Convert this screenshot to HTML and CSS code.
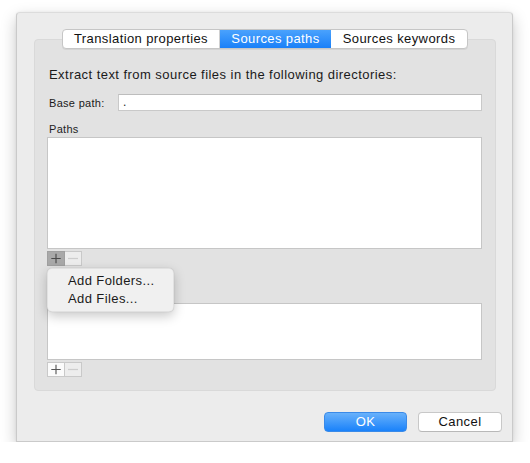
FILE: index.html
```html
<!DOCTYPE html>
<html>
<head>
<meta charset="utf-8">
<link rel="stylesheet" href="styles.css">
</head>
<body>
<div class="window">
  <div class="tabs">
    <div class="tab tab-1">Translation properties</div>
    <div class="tab tab-2 active">Sources paths</div>
    <div class="tab tab-3">Sources keywords</div>
  </div>
  <div class="tabbox">
    <div class="intro">Extract text from source files in the following directories:</div>
    <div class="base-row">
      <label class="base-label">Base path:</label>
      <div class="field">.</div>
    </div>
    <div class="list-label">Paths</div>
    <div class="list list-paths"></div>
    <div class="bar-wrap">
      <div class="bar">
        <div class="btn btn-plus pressed">
          <svg width="17" height="13" viewBox="0 0 17 13"><path d="M8.5 1.5v10M3.5 6.5h10" stroke="#4a4a4a" stroke-width="1.2" fill="none"/></svg>
        </div>
        <div class="btn btn-minus disabled">
          <svg width="16" height="13" viewBox="0 0 16 13"><path d="M3 6.5h10" stroke="#cdcdcd" stroke-width="1.2" fill="none"/></svg>
        </div>
      </div>
      <div class="menu">
        <div class="menu-item">Add Folders...</div>
        <div class="menu-item">Add Files...</div>
      </div>
    </div>
    <div class="list list-second"></div>
    <div class="bar">
      <div class="btn btn-plus">
        <svg width="17" height="13" viewBox="0 0 17 13"><path d="M8.5 1.5v10M3.5 6.5h10" stroke="#555" stroke-width="1.2" fill="none"/></svg>
      </div>
      <div class="btn btn-minus disabled">
        <svg width="16" height="13" viewBox="0 0 16 13"><path d="M3 6.5h10" stroke="#cdcdcd" stroke-width="1.2" fill="none"/></svg>
      </div>
    </div>
  </div>
  <div class="footer">
    <div class="button ok">OK</div>
    <div class="button cancel">Cancel</div>
  </div>
</div>
</body>
</html>
```
FILE: styles.css
```css
* { box-sizing: border-box; }
html, body {
  margin: 0;
  padding: 0;
  background: #ffffff;
  font-family: "Liberation Sans", Arial, sans-serif;
  color: #1e1e1e;
}
body { padding: 12px 0 0 16px; }

.window {
  width: 497px;
  height: 430px;
  background: #ececec;
  border: 1px solid #cacaca;
  border-top-color: #dcdcdc;
  border-radius: 4px 4px 0 0;
  box-shadow: 0 6px 16px rgba(0,0,0,0.22), 0 0 3px rgba(0,0,0,0.06);
  padding: 16px 0 9px 0;
  display: flex;
  flex-direction: column;
}

.tabs {
  position: relative;
  z-index: 2;
  align-self: center;
  margin-left: 1px;
  display: flex;
  height: 20px;
  border: 1px solid #c6c6c6;
  border-radius: 4px;
  background: #ffffff;
  box-shadow: 0 1px 0 rgba(0,0,0,0.06);
  overflow: hidden;
}
.tab {
  font-size: 13px;
  letter-spacing: 0.4px;
  line-height: 18px;
  text-align: center;
  color: #111;
}
.tab-1 { width: 157px; border-right: 1px solid #d0d0d0; }
.tab-2 { width: 111px; }
.tab-3 { width: 136px; }
.tab.active {
  background: linear-gradient(#4aa2fd, #1a80f8);
  color: #ffffff;
  border-color: #1a7cf0;
}

.tabbox {
  margin: -10px 16px 0 17px;
  height: 352px;
  background: #e2e2e2;
  border: 1px solid #d9d9d9;
  border-radius: 4px;
  padding: 27px 13px 0 12px;
}

.intro {
  font-size: 13px;
  letter-spacing: 0.45px;
  line-height: 16px;
  padding-left: 2px;
  color: #1a1a1a;
}

.base-row {
  display: flex;
  align-items: center;
  margin-top: 11px;
  height: 17px;
}
.base-label {
  font-size: 11px;
  letter-spacing: 0.3px;
  width: 71px;
  padding-left: 2px;
  color: #1a1a1a;
}
.field {
  flex: 1;
  height: 17px;
  background: #ffffff;
  border: 1px solid #c9c9c9;
  border-top-color: #bdbdbd;
  font-size: 12px;
  line-height: 15px;
  padding-left: 4px;
}

.list-label {
  margin-top: 11px;
  font-size: 11px;
  letter-spacing: 0.3px;
  line-height: 14px;
  padding-left: 2px;
  margin-bottom: 1px;
}

.list {
  background: #ffffff;
  border: 1px solid #c6c6c6;
}
.list-paths { height: 112px; }
.list-second { height: 57px; margin-top: 37px; }

.bar-wrap { position: relative; }
.bar {
  display: flex;
  margin-top: 2px;
  height: 15px;
}
.btn {
  height: 15px;
  border: 1px solid #c9c9c9;
  display: flex;
  align-items: center;
  justify-content: center;
  background: #fbfbfb;
}
.btn-plus { width: 18px; }
.btn-minus { width: 17px; border-left: none; background: #ededed; }
.btn.pressed { background: #a9a9a9; border-color: #a0a0a0; }
.btn svg { display: block; }

.menu {
  position: absolute;
  left: 0;
  top: 17px;
  width: 127px;
  height: 44px;
  background: #f0f0f0;
  border-radius: 5px;
  border: 1px solid rgba(0,0,0,0.06);
  box-shadow: 0 4px 12px rgba(0,0,0,0.22), 0 0 1px rgba(0,0,0,0.2);
  padding: 3px 0 0 20px;
  z-index: 5;
}
.menu-item {
  font-size: 13px;
  letter-spacing: 0.4px;
  line-height: 18px;
  color: #1a1a1a;
}

.footer {
  margin-top: 21px;
  display: flex;
  justify-content: flex-end;
  gap: 11px;
  padding-right: 10px;
}
.button {
  height: 20px;
  font-size: 13px;
  letter-spacing: 0.4px;
  line-height: 18px;
  text-align: center;
  border-radius: 4px;
}
.ok {
  width: 83px;
  background: linear-gradient(#68b1fb, #1a82fa);
  border: 1px solid #3a8ae8;
  color: #ffffff;
}
.cancel {
  width: 84px;
  background: #ffffff;
  border: 1px solid #c8c8c8;
  border-bottom-color: #b8b8b8;
  color: #111;
}
```
